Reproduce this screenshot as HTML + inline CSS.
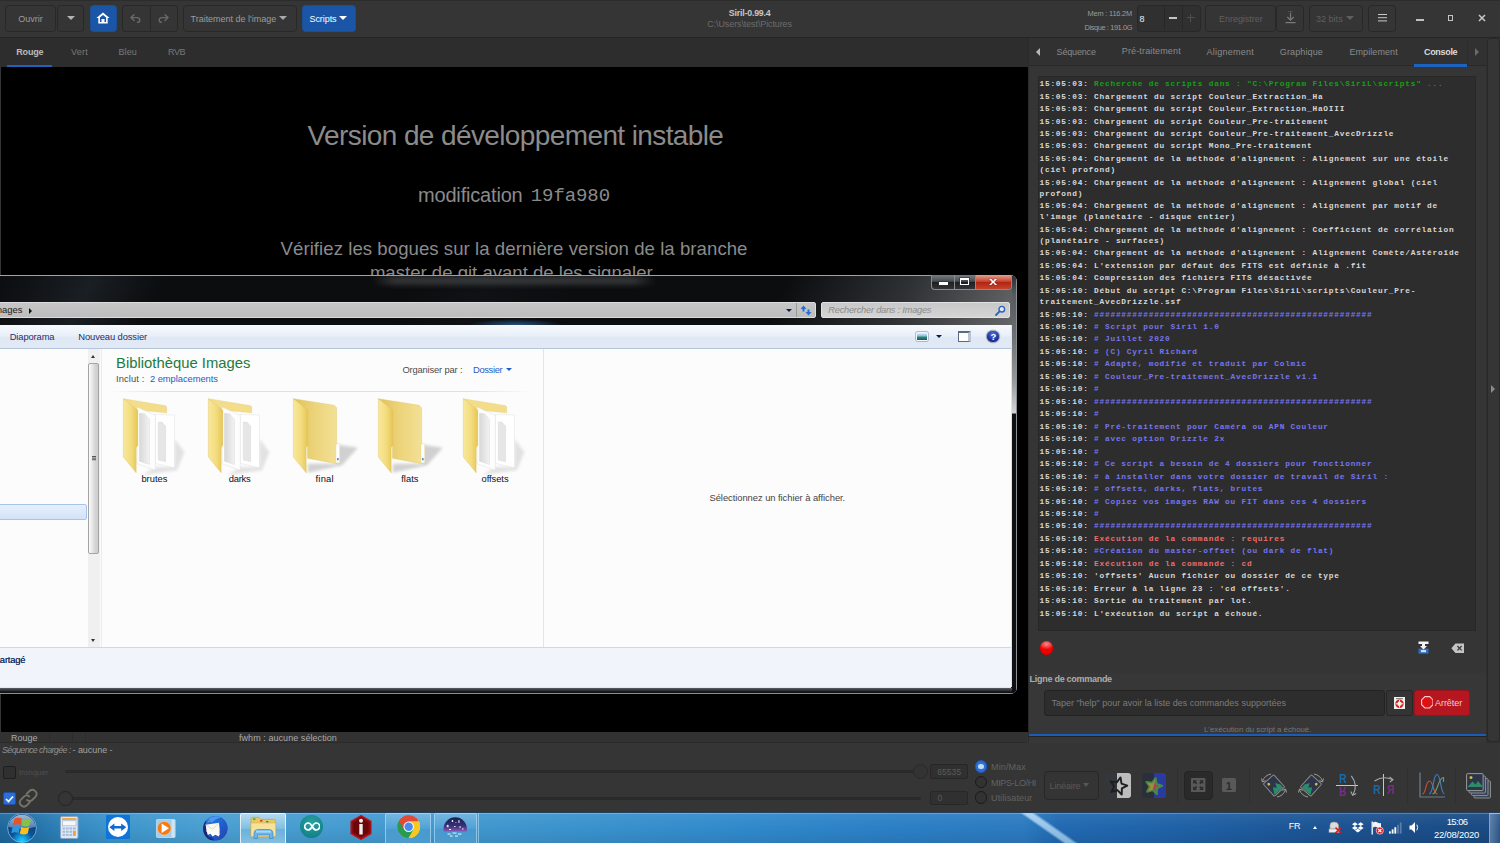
<!DOCTYPE html>
<html lang="fr">
<head>
<meta charset="utf-8">
<title>Siril-0.99.4</title>
<style>
*{box-sizing:border-box;margin:0;padding:0}
html,body{width:1500px;height:843px;overflow:hidden;background:#353535}
body{position:relative;font-family:"Liberation Sans",sans-serif;font-size:9px;color:#d0d0d0}
.abs{position:absolute}
.t{position:absolute;white-space:pre;line-height:1}
#hdr{position:absolute;left:0;top:0;width:1500px;height:38px;background:#353535;border-top:1px solid #2c2c2c;border-bottom:1px solid #252525}
#hdr .abs,#hdr .t{margin-top:-1px}
.btn{position:absolute;top:4px;height:27px;border:1px solid #282828;border-radius:3.5px;background:#353535}
.btn.blue{background:#1b56a6;border-color:#1a4f98}
#ltabs{position:absolute;left:0;top:38px;width:1028px;height:29px;background:#2d2d2d}
#img{position:absolute;left:1px;top:67px;width:1026.5px;height:665px;background:#000;overflow:hidden}
#status{position:absolute;left:0;top:732px;width:1027px;height:11px;background:#323232;border-bottom:1px solid #2b2b2b}
#rp{position:absolute;left:1029px;top:38px;width:457px;height:705px;background:#353535}
#rtabs{position:absolute;left:0;top:0;width:457px;height:28px;background:#313131;border-bottom:1px solid #292929}
#rlow{position:absolute;left:0;top:635px;width:457px;height:70px;background:#373737}
#console{position:absolute;left:9.3px;top:38px;width:438px;height:555px;background:#2d2d2d;border:1px solid #282828;font-family:"Liberation Mono",monospace;font-weight:bold;font-size:7.8px;letter-spacing:0.78px;line-height:11.17px;color:#d8d8d8;padding:2.1px 0 0 0.2px;overflow:hidden}
#console p{margin:0 0 1.3px 0;white-space:pre}
.g{color:#12a012}.b{color:#7676ee}.r{color:#ea6e6e}
#exp{position:absolute;left:0;top:275px;width:1017px;height:419px;overflow:hidden;border-radius:0 7px 7px 0;background:#0c0e10;box-shadow:inset 0 1px 0 #a0a4a8,inset -1px 0 0 #8c9094,inset 0 -1px 0 #8c9094}
#glass{position:absolute;left:0;top:1px;width:1016px;height:417px;border-radius:0 6px 6px 0;background:linear-gradient(115deg,rgba(40,48,56,0) 0,rgba(40,48,56,.5) 9%,rgba(20,24,28,0) 16%,rgba(20,24,28,0) 40%,rgba(40,46,52,.14) 47%,rgba(20,24,28,0) 56%,rgba(20,24,28,0) 76%,rgba(90,94,98,.45) 88%,rgba(140,142,144,.7) 100%) 0 0/1016px 50px no-repeat,#0b0d0f}
#bfr{position:absolute;left:0;top:412.5px;width:1012px;height:5.5px;background:linear-gradient(180deg,#5c6064 0,#3a3e42 35%,#14171a 75%,#0c0e10 100%)}
#rfr{position:absolute;left:1012px;top:1px;width:4px;height:417px;background:linear-gradient(180deg,#2a2e32 0,#565a5e 18px,#6c7074 60px,#96989a 105px,#d4d4d4 137px,#0e1012 138px,#0e1012 100%)}
#cl{position:absolute;left:0;top:49.7px;width:1011.4px;height:362px;overflow:hidden;background:#fcfcfc;box-shadow:1px 0 0 #dfe3e8,0 1px 0 #e4e8ee}
#tb{position:absolute;left:0;top:0;width:1012px;height:24px;background:linear-gradient(#f7fafd,#e9f0f9 45%,#dfe8f4 55%,#e1e9f5);border-bottom:1px solid #b4c4da}
#bottom{position:absolute;left:0;top:0;width:0;height:0}
#taskbar{position:absolute;left:0;top:812px;width:1500px;height:31px;overflow:hidden;background:linear-gradient(90deg,#1e679c 0,#2474aa 2.5%,#3389c0 5%,#3d95ca 7.5%,#4a9fd2 14%,#3f97ce 33%,#3089cb 50%,#2b7fc5 60%,#2c7ac0 68.3%,#216ab2 70.5%,#1f62a8 78%,#1c5494 88%,#1a4a82 100%);box-shadow:inset 0 1px 0 #22405e}
#tbsw{position:absolute;left:0;top:0;width:1500px;height:31px;background:linear-gradient(rgba(0,0,0,0) 1px,rgba(255,255,255,.28) 1px,rgba(255,255,255,.28) 2px,rgba(255,255,255,.06) 2px,rgba(255,255,255,0) 50%,rgba(0,0,0,.08))}
#streak{position:absolute;left:1019px;top:1px;width:17px;height:30px;transform-origin:0 0;transform:skewX(55deg);background:linear-gradient(90deg,rgba(190,225,250,0),rgba(190,225,250,.85) 28%,rgba(190,225,250,.85) 70%,rgba(190,225,250,0));-webkit-mask-image:linear-gradient(#000,rgba(0,0,0,.75));mask-image:linear-gradient(#000,rgba(0,0,0,.75))}
</style>
</head>
<body>
<div id="hdr">
<div class="btn " style="left:5px;width:51px;"></div>
<div class="t" style="left:18.2px;top:14.9px;font-size:9px;color:#9c9c9c;letter-spacing:0.03px;">Ouvrir</div>
<div class="btn " style="left:57px;width:27px;"></div>
<div class="abs" style="left:66.5px;top:15.8px;border-left:4px solid transparent;border-right:4px solid transparent;border-top:4.6px solid #b4b4b4"></div>
<div class="btn blue" style="left:89.5px;width:27.5px;"><svg class="abs" style="left:5.7px;top:6.7px" width="14" height="12" viewBox="0 0 14 12"><path d="M7 0.4 L13.6 6 H11.7 V11.4 H2.3 V6 H0.4 Z" fill="#fff"/><path d="M7 3 L10.1 5.6 V9.9 H8.5 V6.9 H5.5 V9.9 H3.9 V5.6 Z" fill="#1b56a6"/></svg></div>
<div class="btn " style="left:122px;width:29px;border-radius:3px 0 0 3px"><svg class="abs" style="left:7.2px;top:8.8px" width="11" height="9" viewBox="0 0 11 9"><path d="M4 0.8 L1 3.6 L4 6.4 M1.2 3.6 H7 Q9.8 3.6 9.8 6.2 Q9.8 8.3 7.5 8.3" fill="none" stroke="#696969" stroke-width="1.4" stroke-linecap="round" stroke-linejoin="round"/></svg></div>
<div class="btn " style="left:150px;width:28px;border-radius:0 3px 3px 0"><svg class="abs" style="left:6.8px;top:8.8px" width="11" height="9" viewBox="0 0 11 9"><path d="M7 0.8 L10 3.6 L7 6.4 M9.8 3.6 H4 Q1.2 3.6 1.2 6.2 Q1.2 8.3 3.5 8.3" fill="none" stroke="#696969" stroke-width="1.4" stroke-linecap="round" stroke-linejoin="round"/></svg></div>
<div class="btn " style="left:183px;width:114px;"></div>
<div class="t" style="left:190.5px;top:14.9px;font-size:9px;color:#9c9c9c;letter-spacing:-0.01px;">Traitement de l'image</div>
<div class="abs" style="left:279px;top:15.8px;border-left:4px solid transparent;border-right:4px solid transparent;border-top:4.6px solid #a8a8a8"></div>
<div class="btn blue" style="left:302px;width:54px;"></div>
<div class="t" style="left:309.5px;top:14.9px;font-size:9px;color:#fff;letter-spacing:-0.07px;">Scripts</div>
<div class="abs" style="left:338.5px;top:15.8px;border-left:4px solid transparent;border-right:4px solid transparent;border-top:4.6px solid #fff"></div>
<div class="t" style="left:728.8px;top:9.0px;font-size:8.8px;color:#c6c6c6;font-weight:bold;letter-spacing:-0.19px;">Siril-0.99.4</div>
<div class="t" style="left:707.3px;top:20.0px;font-size:9px;color:#6c6c6c;letter-spacing:-0.11px;">C:\Users\test\Pictures</div>
<div class="t" style="left:1087.5px;top:10.3px;font-size:7.4px;color:#9c9c9c;letter-spacing:-0.18px;">Mem : 116.2M</div>
<div class="t" style="left:1084.5px;top:23.8px;font-size:7.4px;color:#9c9c9c;letter-spacing:-0.39px;">Disque : 191.0G</div>
<div class="btn " style="left:1137px;width:63.5px;background:#303030"><div class="abs" style="left:26px;top:0;width:1px;height:25px;background:#282828"></div><div class="abs" style="left:44.2px;top:0;width:1px;height:25px;background:#282828"></div><div class="abs" style="left:30.8px;top:11.6px;width:8.2px;height:2.2px;background:#c4c4c4"></div><div class="abs" style="left:48.8px;top:12.2px;width:8px;height:1px;background:#4e4e4e"></div><div class="abs" style="left:52.3px;top:8.7px;width:1px;height:8px;background:#4e4e4e"></div></div>
<div class="t" style="left:1139.5px;top:14.5px;font-size:9px;color:#f0f0f0;">8</div>
<div class="btn " style="left:1205px;width:71px;"></div>
<div class="t" style="left:1219.0px;top:14.9px;font-size:9px;color:#5f5f5f;letter-spacing:-0.03px;">Enregistrer</div>
<div class="btn " style="left:1276px;width:28px;"><svg class="abs" style="left:8px;top:6px" width="11" height="13" viewBox="0 0 11 13"><path d="M3.4 0.7h1M5 0.7h1M6.6 0.7h1" stroke="#777" stroke-width="0.8"/><path d="M5.5 2 V9 M2.3 6 L5.5 9.2 L8.7 6 M0.5 11.6 H10.5" fill="none" stroke="#7a7a7a" stroke-width="1.2"/></svg></div>
<div class="btn " style="left:1308.5px;width:54.5px;"></div>
<div class="t" style="left:1316.0px;top:14.9px;font-size:9px;color:#5f5f5f;letter-spacing:0.02px;">32 bits</div>
<div class="abs" style="left:1345.5px;top:15.8px;border-left:4px solid transparent;border-right:4px solid transparent;border-top:4.6px solid #5f5f5f"></div>
<div class="btn " style="left:1368px;width:28px;"><div class="abs" style="left:8.7px;top:8.8px;width:9px;height:1.7px;background:#c8c8c8;box-shadow:0 3.2px 0 #c8c8c8,0 6.4px 0 #c8c8c8"></div></div>
<div class="abs" style="left:1416px;top:19.3px;width:7.5px;height:1.7px;background:#c0c0c0"></div>
<div class="abs" style="left:1448.2px;top:15.4px;width:5.2px;height:5.2px;border:1.6px solid #c4c4c4"></div>
<svg class="abs" style="left:1478px;top:14px" width="8" height="8" viewBox="0 0 8 8"><path d="M1 1 L7 7 M7 1 L1 7" stroke="#c8c8c8" stroke-width="1.5"/></svg>
</div>
<div id="ltabs"></div>
<div class="t" style="left:16.3px;top:48.2px;font-size:9px;color:#bcbcbc;font-weight:bold;letter-spacing:-0.20px;">Rouge</div>
<div class="t" style="left:71.0px;top:48.2px;font-size:9px;color:#787878;letter-spacing:0.25px;">Vert</div>
<div class="t" style="left:118.5px;top:48.2px;font-size:9px;color:#787878;letter-spacing:0.12px;">Bleu</div>
<div class="t" style="left:168.0px;top:48.2px;font-size:9px;color:#787878;letter-spacing:-0.45px;">RVB</div>
<div class="abs" style="left:7px;top:65px;width:45px;height:2px;background:#1c63c0"></div>
<div id="img">
<div class="t" style="left:306.6px;top:55.3px;font-size:28px;color:#8b8b8b;letter-spacing:-0.61px;">Version de développement instable</div>
<div class="t" style="left:417.0px;top:117.6px;font-size:20px;color:#8b8b8b;letter-spacing:-0.18px;">modification</div>
<div class="t" style="left:529.8px;top:119.9px;font-size:19px;color:#8b8b8b;font-family:'Liberation Mono',monospace;letter-spacing:-0.09px;">19fa980</div>
<div class="t" style="left:279.6px;top:172.8px;font-size:18.6px;color:#8b8b8b;letter-spacing:0.05px;">Vérifiez les bogues sur la dernière version de la branche</div>
<div class="t" style="left:368.9px;top:196.8px;font-size:18.6px;color:#8b8b8b;letter-spacing:-0.01px;">master de git avant de les signaler.</div>
</div>
<svg width="0" height="0" style="position:absolute"><defs>
<linearGradient id="fl" x1="0" y1="0" x2="1" y2="0"><stop offset="0" stop-color="#f8e89c"/><stop offset=".55" stop-color="#f3dc7c"/><stop offset="1" stop-color="#e6c556"/></linearGradient>
<linearGradient id="bk" x1="0" y1="0" x2="1" y2="0"><stop offset="0" stop-color="#e2c25a"/><stop offset=".5" stop-color="#ecd47a"/><stop offset="1" stop-color="#f3e096"/></linearGradient>
<linearGradient id="pg" x1="0" y1="0" x2="1" y2="0"><stop offset="0" stop-color="#d8d8d8"/><stop offset="1" stop-color="#f2f2f2"/></linearGradient>
<filter id="bl" x="-30%" y="-30%" width="160%" height="160%"><feGaussianBlur stdDeviation="9"/></filter>
</defs></svg>
<div id="exp">
<div id="glass"></div><div id="rfr"></div><div id="bfr"></div>
<div class="abs" style="left:372px;top:1px;width:284px;height:9px;background:linear-gradient(90deg,rgba(150,150,150,0),rgba(150,150,150,.28) 8%,rgba(150,150,150,.28) 92%,rgba(150,150,150,0));filter:blur(2.5px)"></div>
<div class="abs" style="left:468px;top:44px;width:96px;height:6px;background:radial-gradient(ellipse at 50% 100%,rgba(60,130,210,.6),rgba(60,130,210,0) 70%)"></div>
<div class="abs" style="left:931px;top:0;width:81px;height:15px;border:1px solid #8a8d90;border-top:none;border-radius:0 0 4px 4px;overflow:hidden;background:linear-gradient(#787c80,#4a4d50 45%,#1c1e20 52%,#323538)"><div class="abs" style="left:22px;top:0;width:1px;height:15px;background:#8a8d90"></div><div class="abs" style="left:43px;top:0;width:1px;height:15px;background:#8a8d90"></div><div class="abs" style="left:44px;top:0;width:37px;height:15px;background:linear-gradient(#e0a090,#c8402c 45%,#b42410 50%,#c84a30)"></div><div class="abs" style="left:7.3px;top:7.2px;width:8.4px;height:3px;background:#fff;box-shadow:0 0 0 .6px #333"></div><div class="abs" style="left:28.2px;top:3.2px;width:9px;height:6.8px;border:1.6px solid #fff;border-top-width:2.4px;box-shadow:0 0 0 .6px #333"></div></div>
<div class="t" style="left:989.6px;top:0.7px;font-size:11px;color:#fff;font-weight:bold;transform:scaleX(1.35);text-shadow:0 0 1px #400;">x</div>
<div class="abs" style="left:-5px;top:27px;width:821px;height:16px;background:linear-gradient(#c6c6c6,#bdbdbd);border:1px solid #dcdcdc;border-radius:2px"></div>
<div class="t" style="left:-8.3px;top:30.1px;font-size:9.4px;color:#1a1a1a;">Images</div>
<div class="abs" style="left:29px;top:32.5px;border-top:3px solid transparent;border-bottom:3px solid transparent;border-left:3.5px solid #111"></div>
<div class="abs" style="left:786px;top:34px;border-left:3px solid transparent;border-right:3px solid transparent;border-top:3.5px solid #0a1a5a"></div>
<div class="abs" style="left:796px;top:28px;width:1px;height:14px;background:#9a9a9a"></div>
<svg class="abs" style="left:800px;top:29.5px" width="12" height="11" viewBox="0 0 12 11"><path d="M3.5 0.5 L0.5 4 H2.5 V6.5 H4.5 V4 H6.5 Z" fill="#2a6fd0"/><path d="M8.5 10.5 L5.5 7 H7.5 V4.5 H9.5 V7 H11.5 Z" fill="#2a6fd0"/></svg>
<div class="abs" style="left:821px;top:27px;width:189px;height:16px;background:linear-gradient(#c8c8c8,#d4d4d4);border:1px solid #e2e2e2;border-radius:2px"></div>
<div class="t" style="left:828.3px;top:31.1px;font-size:9.2px;color:#8a8a8a;font-style:italic;letter-spacing:-0.20px;">Rechercher dans : Images</div>
<svg class="abs" style="left:995px;top:29.5px" width="11" height="11" viewBox="0 0 11 11"><circle cx="6.8" cy="4.2" r="2.8" fill="#dfe8f4" stroke="#2a64c0" stroke-width="1.4"/><path d="M4.6 6.4 L1 10" stroke="#2a64c0" stroke-width="1.8" stroke-linecap="round"/></svg>
<div id="cl">
<div id="tb"></div>
<div class="t" style="left:9.7px;top:7.0px;font-size:9.4px;color:#1e2f6e;letter-spacing:-0.12px;">Diaporama</div>
<div class="t" style="left:78.3px;top:7.0px;font-size:9.4px;color:#1e2f6e;letter-spacing:-0.11px;">Nouveau dossier</div>
<div class="abs" style="left:916px;top:7.2px;width:12px;height:9.4px;background:linear-gradient(180deg,#dff0ff 0,#8cc4f4 38%,#2f8a58 62%,#1c4c90 100%);border:1.4px solid #f4f8fc;border-radius:1.5px;box-shadow:0 0 0 .7px #9aa8bc"></div>
<div class="abs" style="left:935.5px;top:10.8px;border-left:3px solid transparent;border-right:3px solid transparent;border-top:3px solid #0a1a4a"></div>
<div class="abs" style="left:958.3px;top:6.5px;width:12.5px;height:10.5px;background:#fdfdfd;border:1px solid #5a6a82;border-top:2.5px solid #5a6a82;border-right:3px solid #b8c4d6"></div>
<div class="abs" style="left:986px;top:5px;width:13.6px;height:13.6px;border-radius:50%;background:radial-gradient(circle at 50% 30%,#4a78e0,#1a2f9a 65%,#14247e);border:1.3px solid #9698a4;box-shadow:0 0 0 0.5px #c8d0e0"></div>
<div class="t" style="left:990.4px;top:7.4px;font-size:9.5px;color:#fff;font-weight:bold;">?</div>
<div class="abs" style="left:0px;top:24px;width:1012px;height:299px;background:#fcfcfc"></div>
<div class="abs" style="left:-2px;top:179px;width:88.5px;height:16px;background:linear-gradient(#e6f0fc,#d2e2f8);border:1px solid #a8c4ea;border-radius:2px"></div>
<div class="abs" style="left:87.5px;top:24px;width:12.5px;height:299px;background:#f0f0f0"></div>
<div class="abs" style="left:87.6px;top:38.3px;width:11.6px;height:191.4px;background:linear-gradient(90deg,#fbfbfb,#e8e8e8 35%,#d3d3d3 70%,#cdcdcd);border:1px solid #a4a4a4;border-radius:2px"></div>
<div class="abs" style="left:91.5px;top:131.5px;width:4.5px;height:0.8px;background:#555;box-shadow:0 1.6px 0 #555,0 3.2px 0 #555"></div>
<div class="abs" style="left:91px;top:30.5px;border-left:2.7px solid transparent;border-right:2.7px solid transparent;border-bottom:3px solid #333"></div>
<div class="abs" style="left:91px;top:314.5px;border-left:2.7px solid transparent;border-right:2.7px solid transparent;border-top:3px solid #333"></div>
<div class="abs" style="left:100.5px;top:24px;width:1px;height:299px;background:#e6ecf5"></div>
<div class="abs" style="left:543px;top:24px;width:1px;height:299px;background:#dbe5f3"></div>
<div class="t" style="left:116.1px;top:30.9px;font-size:14.8px;color:#1e7a40;letter-spacing:0.01px;">Bibliothèque Images</div>
<div class="t" style="left:116.0px;top:49.3px;font-size:9.4px;color:#4c4c4c;letter-spacing:0.11px;">Inclut :</div>
<div class="t" style="left:150.0px;top:49.3px;font-size:9.4px;color:#1c5ec8;letter-spacing:-0.06px;">2 emplacements</div>
<div class="t" style="left:402.4px;top:40.6px;font-size:9.4px;color:#4c4c4c;letter-spacing:-0.17px;">Organiser par :</div>
<div class="t" style="left:473.0px;top:40.6px;font-size:9.4px;color:#1c5ec8;letter-spacing:-0.35px;">Dossier</div>
<div class="abs" style="left:506px;top:43.3px;border-left:3px solid transparent;border-right:3px solid transparent;border-top:3px solid #1c5ec8"></div>
<div class="abs" style="left:108px;top:66px;width:425px;height:1px;background:linear-gradient(90deg,rgba(214,226,242,0),#d6e2f2 15%,#d6e2f2 85%,rgba(214,226,242,0))"></div>
<svg class="abs" style="left:121.7px;top:72.2px" width="58.3" height="80" viewBox="0 0 350 480" overflow="visible">
<path d="M315 250 L375 330 L330 440 L120 470 L200 420 L315 420 Z" fill="#000" opacity=".10" filter="url(#bl)"/>
<path d="M8 10 L262 52 L268 60 V95 L95 78 Z" fill="#f3dd8a" stroke="#e2c664" stroke-width="2"/>
<path d="M200 105 L315 108 V425 L200 398 Z" fill="#fff" stroke="#d4d4d4" stroke-width="2"/>
<path d="M218 150 L240 150 L262 175 V388 L218 378 Z" fill="#e6e6e6" stroke="#cfcfcf" stroke-width="2"/>
<path d="M90 60 L200 110 V440 L90 400 Z" fill="#fdfdfd" stroke="#d0d0d0" stroke-width="2"/>
<path d="M105 98 L135 100 L165 135 V405 L105 385 Z" fill="url(#pg)" stroke="#cfcfcf" stroke-width="2"/>
<path d="M8 10 L95 80 V290 L85 305 V455 L8 360 Z" fill="url(#fl)" stroke="#d9b84c" stroke-width="2"/></svg>
<div class="t" style="left:141.4px;top:149.1px;font-size:9.4px;color:#111;letter-spacing:-0.01px;">brutes</div>
<svg class="abs" style="left:206.85000000000002px;top:72.2px" width="58.3" height="80" viewBox="0 0 350 480" overflow="visible">
<path d="M315 250 L375 330 L330 440 L120 470 L200 420 L315 420 Z" fill="#000" opacity=".10" filter="url(#bl)"/>
<path d="M8 10 L262 52 L268 60 V95 L95 78 Z" fill="#f3dd8a" stroke="#e2c664" stroke-width="2"/>
<path d="M200 105 L315 108 V425 L200 398 Z" fill="#fff" stroke="#d4d4d4" stroke-width="2"/>
<path d="M218 150 L240 150 L262 175 V388 L218 378 Z" fill="#e6e6e6" stroke="#cfcfcf" stroke-width="2"/>
<path d="M90 60 L200 110 V440 L90 400 Z" fill="#fdfdfd" stroke="#d0d0d0" stroke-width="2"/>
<path d="M105 98 L135 100 L165 135 V405 L105 385 Z" fill="url(#pg)" stroke="#cfcfcf" stroke-width="2"/>
<path d="M8 10 L95 80 V290 L85 305 V455 L8 360 Z" fill="url(#fl)" stroke="#d9b84c" stroke-width="2"/></svg>
<div class="t" style="left:228.8px;top:149.1px;font-size:9.4px;color:#111;letter-spacing:-0.27px;">darks</div>
<svg class="abs" style="left:292.0px;top:72.2px" width="66.7" height="80" viewBox="0 0 400 480" overflow="visible">
<path d="M268 285 L395 305 L300 410 L95 455 L95 400 L268 400 Z" fill="#000" opacity=".17" filter="url(#bl)"/>
<path d="M8 10 L253 50 L268 65 V400 L93 368 V80 Z" fill="url(#bk)" stroke="#dcbf58" stroke-width="2"/>
<rect x="264" y="282" width="22" height="112" rx="3" fill="#fff" stroke="#e6d08a" stroke-width="2"/>
<rect x="270" y="366" width="10" height="14" fill="#4f8fe0"/>
<path d="M8 10 L95 80 V290 L85 305 V455 L8 360 Z" fill="url(#fl)" stroke="#d9b84c" stroke-width="2"/></svg>
<div class="t" style="left:315.5px;top:149.1px;font-size:9.4px;color:#111;letter-spacing:0.24px;">final</div>
<svg class="abs" style="left:377.15000000000003px;top:72.2px" width="66.7" height="80" viewBox="0 0 400 480" overflow="visible">
<path d="M268 285 L395 305 L300 410 L95 455 L95 400 L268 400 Z" fill="#000" opacity=".17" filter="url(#bl)"/>
<path d="M8 10 L253 50 L268 65 V400 L93 368 V80 Z" fill="url(#bk)" stroke="#dcbf58" stroke-width="2"/>
<rect x="264" y="282" width="22" height="112" rx="3" fill="#fff" stroke="#e6d08a" stroke-width="2"/>
<rect x="270" y="366" width="10" height="14" fill="#4f8fe0"/>
<path d="M8 10 L95 80 V290 L85 305 V455 L8 360 Z" fill="url(#fl)" stroke="#d9b84c" stroke-width="2"/></svg>
<div class="t" style="left:401.2px;top:149.1px;font-size:9.4px;color:#111;letter-spacing:0.04px;">flats</div>
<svg class="abs" style="left:462.3px;top:72.2px" width="58.3" height="80" viewBox="0 0 350 480" overflow="visible">
<path d="M315 250 L375 330 L330 440 L120 470 L200 420 L315 420 Z" fill="#000" opacity=".10" filter="url(#bl)"/>
<path d="M8 10 L262 52 L268 60 V95 L95 78 Z" fill="#f3dd8a" stroke="#e2c664" stroke-width="2"/>
<path d="M200 105 L315 108 V425 L200 398 Z" fill="#fff" stroke="#d4d4d4" stroke-width="2"/>
<path d="M218 150 L240 150 L262 175 V388 L218 378 Z" fill="#e6e6e6" stroke="#cfcfcf" stroke-width="2"/>
<path d="M90 60 L200 110 V440 L90 400 Z" fill="#fdfdfd" stroke="#d0d0d0" stroke-width="2"/>
<path d="M105 98 L135 100 L165 135 V405 L105 385 Z" fill="url(#pg)" stroke="#cfcfcf" stroke-width="2"/>
<path d="M8 10 L95 80 V290 L85 305 V455 L8 360 Z" fill="url(#fl)" stroke="#d9b84c" stroke-width="2"/></svg>
<div class="t" style="left:481.5px;top:149.1px;font-size:9.4px;color:#111;letter-spacing:-0.06px;">offsets</div>
<div class="t" style="left:709.5px;top:168.3px;font-size:9.4px;color:#444;letter-spacing:-0.05px;">Sélectionnez un fichier à afficher.</div>
<div class="abs" style="left:0px;top:322.5px;width:1012px;height:41px;background:#f1f5fb;border-top:1px solid #ccd9ea"></div>
<div class="t" style="left:-5.2px;top:330.5px;font-size:9.4px;color:#1e3566;letter-spacing:-0.17px;text-shadow:0 0 .4px #1e3566;">partagé</div>
</div>
</div>
<div id="status"></div>
<div class="t" style="left:11.0px;top:733.6px;font-size:9px;color:#a8a8a8;letter-spacing:-0.01px;">Rouge</div>
<div class="t" style="left:239.0px;top:733.6px;font-size:9px;color:#a8a8a8;letter-spacing:0.06px;">fwhm : aucune sélection</div>
<div class="abs" style="left:49px;top:733px;width:1px;height:9px;background:#2c2c2c"></div>
<div class="abs" style="left:72px;top:733px;width:1px;height:9px;background:#2c2c2c"></div>
<div class="abs" style="left:85px;top:733px;width:1px;height:9px;background:#2c2c2c"></div>
<div class="abs" style="left:1028px;top:38px;width:1px;height:705px;background:#2b2b2b"></div>
<div id="rp">
<div id="rtabs"></div>
<div id="rlow"></div>
<div id="console">
<p>15:05:03: <span class="g">Recherche de scripts dans : "C:\Program Files\SiriL\scripts" ...</span></p>
<p>15:05:03: Chargement du script Couleur_Extraction_Ha</p>
<p>15:05:03: Chargement du script Couleur_Extraction_HaOIII</p>
<p>15:05:03: Chargement du script Couleur_Pre-traitement</p>
<p>15:05:03: Chargement du script Couleur_Pre-traitement_AvecDrizzle</p>
<p>15:05:03: Chargement du script Mono_Pre-traitement</p>
<p>15:05:04: Chargement de la méthode d'alignement : Alignement sur une étoile<br>(ciel profond)</p>
<p>15:05:04: Chargement de la méthode d'alignement : Alignement global (ciel<br>profond)</p>
<p>15:05:04: Chargement de la méthode d'alignement : Alignement par motif de<br>l'image (planétaire - disque entier)</p>
<p>15:05:04: Chargement de la méthode d'alignement : Coefficient de corrélation<br>(planétaire - surfaces)</p>
<p>15:05:04: Chargement de la méthode d'alignement : Alignement Comète/Astéroïde</p>
<p>15:05:04: L'extension par défaut des FITS est définie à .fit</p>
<p>15:05:04: Compression des fichiers FITS désactivée</p>
<p>15:05:10: Début du script C:\Program Files\SiriL\scripts\Couleur_Pre-<br>traitement_AvecDrizzle.ssf</p>
<p>15:05:10: <span class="b">###################################################</span></p>
<p>15:05:10: <span class="b"># Script pour Siril 1.0</span></p>
<p>15:05:10: <span class="b"># Juillet 2020</span></p>
<p>15:05:10: <span class="b"># (C) Cyril Richard</span></p>
<p>15:05:10: <span class="b"># Adapté, modifié et traduit par Colmic</span></p>
<p>15:05:10: <span class="b"># Couleur_Pre-traitement_AvecDrizzle v1.1</span></p>
<p>15:05:10: <span class="b">#</span></p>
<p>15:05:10: <span class="b">###################################################</span></p>
<p>15:05:10: <span class="b">#</span></p>
<p>15:05:10: <span class="b"># Pré-traitement pour Caméra ou APN Couleur</span></p>
<p>15:05:10: <span class="b"># avec option Drizzle 2x</span></p>
<p>15:05:10: <span class="b">#</span></p>
<p>15:05:10: <span class="b"># Ce script a besoin de 4 dossiers pour fonctionner</span></p>
<p>15:05:10: <span class="b"># à installer dans votre dossier de travail de Siril :</span></p>
<p>15:05:10: <span class="b"># offsets, darks, flats, brutes</span></p>
<p>15:05:10: <span class="b"># Copiez vos images RAW ou FIT dans ces 4 dossiers</span></p>
<p>15:05:10: <span class="b">#</span></p>
<p>15:05:10: <span class="b">###################################################</span></p>
<p>15:05:10: <span class="r">Exécution de la commande : requires</span></p>
<p>15:05:10: <span class="b">#Création du master-offset (ou dark de flat)</span></p>
<p>15:05:10: <span class="r">Exécution de la commande : cd</span></p>
<p>15:05:10: 'offsets' Aucun fichier ou dossier de ce type</p>
<p>15:05:10: Erreur à la ligne 23 : 'cd offsets'.</p>
<p>15:05:10: Sortie du traitement par lot.</p>
<p>15:05:10: L'exécution du script a échoué.</p>
</div>
</div>
<div class="abs" style="left:1036px;top:47.5px;border-top:4px solid transparent;border-bottom:4px solid transparent;border-right:4.5px solid #b8b8b8"></div>
<div class="t" style="left:1056.6px;top:48.0px;font-size:9px;color:#8a8a8a;letter-spacing:-0.17px;">Séquence</div>
<div class="t" style="left:1121.8px;top:46.5px;font-size:9px;color:#8a8a8a;letter-spacing:0.14px;">Pré-traitement</div>
<div class="t" style="left:1206.5px;top:48.0px;font-size:9px;color:#8a8a8a;letter-spacing:0.25px;">Alignement</div>
<div class="t" style="left:1279.8px;top:48.0px;font-size:9px;color:#8a8a8a;letter-spacing:0.13px;">Graphique</div>
<div class="t" style="left:1349.4px;top:48.0px;font-size:9px;color:#8a8a8a;letter-spacing:0.08px;">Empilement</div>
<div class="t" style="left:1424.0px;top:48.0px;font-size:9px;color:#dcdcdc;font-weight:bold;letter-spacing:-0.32px;">Console</div>
<div class="abs" style="left:1414px;top:64px;width:53px;height:3px;background:#1c63c0"></div>
<div class="abs" style="left:1474.5px;top:47.5px;border-top:4px solid transparent;border-bottom:4px solid transparent;border-left:4.5px solid #6a6a6a"></div>
<div class="abs" style="left:1486px;top:38px;width:14px;height:705px;background:#303030"></div>
<div class="abs" style="left:1487px;top:38px;width:12.5px;height:704px;border:1px solid #282828;border-radius:3.5px;background:#353535"></div>
<div class="abs" style="left:1466.5px;top:39px;width:1px;height:26px;background:#2c2c2c"></div>
<div class="abs" style="left:1490.5px;top:385px;border-top:4px solid transparent;border-bottom:4px solid transparent;border-left:4.5px solid #8c8c8c"></div>
<div class="abs" style="left:1039.6px;top:641.2px;width:13.4px;height:13.4px;border-radius:50%;background:radial-gradient(ellipse 60% 40% at 50% 22%,rgba(255,255,255,.55),rgba(255,255,255,0) 100%),radial-gradient(circle at 50% 50%,#f00000 55%,#c00000 85%,#8a0000)"></div>
<svg class="abs" style="left:1418px;top:641px" width="11" height="13" viewBox="0 0 11 13"><rect x="0.5" y="7.6" width="10" height="5" fill="#2f6fd0"/><rect x="3" y="9" width="5" height="2.2" fill="#cfe0f8"/><path d="M0.5 0.6 H10.5 V3 H7 V5 H9 L5.5 8.6 L2 5 H4 V3 H0.5 Z" fill="#f4f4f4"/></svg>
<svg class="abs" style="left:1450.5px;top:642.6px" width="13.5" height="10.5" viewBox="0 0 13.5 10.5"><path d="M0.4 5.25 L4.4 0.5 H13 V10 H4.4 Z" fill="#c4c4c4"/><path d="M6.4 3 L10.6 7.4 M10.6 3 L6.4 7.4" stroke="#3a3a3a" stroke-width="1.3"/></svg>
<div class="t" style="left:1029.6px;top:674.9px;font-size:9px;color:#aeaeae;font-weight:bold;letter-spacing:-0.28px;">Ligne de commande</div>
<div class="abs" style="left:1044.4px;top:689.8px;width:340.3px;height:26px;background:#2d2d2d;border:1px solid #232323;border-radius:3px"></div>
<div class="t" style="left:1051.4px;top:698.9px;font-size:9px;color:#7c7c7c;">Taper "help" pour avoir la liste des commandes supportées</div>
<div class="abs" style="left:1385.5px;top:689.5px;width:27.5px;height:26.5px;border:1px solid #262626;border-radius:3px;background:#343434"></div>
<svg class="abs" style="left:1394px;top:696.5px" width="11" height="12.5" viewBox="0 0 11 12.5"><rect width="11" height="12.5" fill="#f0f0f0"/><circle cx="5.5" cy="6.8" r="3.2" fill="none" stroke="#d02020" stroke-width="2"/><path d="M5.5 3 V10.6 M1.7 6.8 H9.3" stroke="#f0f0f0" stroke-width="1"/><rect x="2" y="1" width="7" height="1.2" fill="#888"/></svg>
<div class="abs" style="left:1413.8px;top:689.5px;width:56.5px;height:26.3px;background:#b5161f;border:1px solid #9c121a;border-radius:3px"></div>
<svg class="abs" style="left:1420.5px;top:696px" width="12.6" height="12.6" viewBox="0 0 12.6 12.6"><path d="M3.9 0.6 H8.7 L12 3.9 V8.7 L8.7 12 H3.9 L0.6 8.7 V3.9 Z" fill="#e01010" stroke="#f0d0d0" stroke-width="1.1"/></svg>
<div class="t" style="left:1435.0px;top:698.7px;font-size:9px;color:#f2cccc;letter-spacing:-0.05px;">Arrêter</div>
<div class="t" style="left:1204.1px;top:726.1px;font-size:7.8px;color:#787878;">L'exécution du script a échoué.</div>
<div class="abs" style="left:1029px;top:734px;width:457px;height:2px;background:#1b5cb8"></div>
<div class="abs" style="left:1029px;top:736px;width:457px;height:1px;background:#222"></div>
<div id="bottom">
<div class="t" style="left:2.0px;top:746.0px;font-size:9px;color:#8e8e8e;font-style:italic;letter-spacing:-0.67px;">Séquence chargée :</div>
<div class="t" style="left:72.5px;top:746.0px;font-size:9px;color:#a2a2a2;letter-spacing:-0.05px;">- aucune -</div>
<div class="abs" style="left:3px;top:766px;width:12.5px;height:12.5px;background:#303030;border:1px solid #1e1e1e;border-radius:2px"></div>
<div class="t" style="left:19.0px;top:768.8px;font-size:8px;color:#4e4e4e;letter-spacing:-0.04px;">tronquer</div>
<div class="abs" style="left:65px;top:770.3px;width:855px;height:3px;background:#2c2c2c;border:1px solid #292929;border-radius:1.5px"></div>
<div class="abs" style="left:912.5px;top:764px;width:15px;height:15px;border-radius:50%;background:#333;border:1px solid #2a2a2a"></div>
<div class="abs" style="left:3px;top:792.2px;width:12.6px;height:12.6px;background:#2b6fd8;border:1px solid #1f4f9e;border-radius:2px"></div>
<svg class="abs" style="left:5px;top:794.6px" width="9" height="8" viewBox="0 0 9 8"><path d="M1 4 L3.5 6.5 L8 1.5" fill="none" stroke="#fff" stroke-width="1.7"/></svg>
<svg class="abs" style="left:17px;top:787.2px" width="22.4" height="22.4" viewBox="0 0 20 20"><g fill="none" stroke="#74746a" stroke-width="1.7" stroke-linecap="round"><path d="M8.6 6.2 L11.4 3.4 A3.7 3.7 0 0 1 16.6 8.6 L13.8 11.4 A3.7 3.7 0 0 1 9 11.6"/><path d="M11.4 13.8 L8.6 16.6 A3.7 3.7 0 0 1 3.4 11.4 L6.2 8.6 A3.7 3.7 0 0 1 11 8.4"/></g></svg>
<div class="abs" style="left:70px;top:797px;width:850.5px;height:3px;background:#2c2c2c;border:1px solid #292929;border-radius:1.5px"></div>
<div class="abs" style="left:58px;top:790.5px;width:15px;height:15px;border-radius:50%;background:#353535;border:1px solid #242424"></div>
<div class="abs" style="left:930.4px;top:764.2px;width:37.3px;height:14.5px;background:#303030;border:1px solid #272727;border-radius:2px"></div>
<div class="t" style="left:937.2px;top:768.1px;font-size:8.4px;color:#5c5c5c;letter-spacing:0.14px;">65535</div>
<div class="abs" style="left:930.4px;top:790.6px;width:37.3px;height:14.6px;background:#303030;border:1px solid #272727;border-radius:2px"></div>
<div class="t" style="left:937.6px;top:794.4px;font-size:8.4px;color:#5c5c5c;">0</div>
<div class="abs" style="left:974.7px;top:760.3000000000001px;width:12.8px;height:12.8px;border-radius:50%;background:#2b6fd8;border:1px solid #1f57b0"></div><div class="abs" style="left:978.3000000000001px;top:763.9000000000001px;width:5.6px;height:5.6px;border-radius:50%;background:#c4d8f4"></div>
<div class="t" style="left:991.0px;top:763.0px;font-size:9px;color:#626262;letter-spacing:0.14px;">Min/Max</div>
<div class="abs" style="left:974.7px;top:775.7px;width:12.8px;height:12.8px;border-radius:50%;background:#323232;border:1.4px solid #1b1b1b"></div>
<div class="t" style="left:991.0px;top:778.5px;font-size:9px;color:#626262;letter-spacing:-0.35px;">MIPS-LO/HI</div>
<div class="abs" style="left:974.7px;top:791.2px;width:12.8px;height:12.8px;border-radius:50%;background:#323232;border:1.4px solid #1b1b1b"></div>
<div class="t" style="left:991.0px;top:794.0px;font-size:9px;color:#626262;letter-spacing:0.13px;">Utilisateur</div>
<div class="abs" style="left:1044px;top:770.5px;width:54.5px;height:29px;border:1px solid #272727;border-radius:4px;background:#343434"></div>
<div class="t" style="left:1049.5px;top:781.6px;font-size:9px;color:#585858;letter-spacing:-0.13px;">Linéaire</div>
<div class="abs" style="left:1083px;top:782.5px;border-left:3.8px solid transparent;border-right:3.8px solid transparent;border-top:4.2px solid #585858"></div>
<div class="abs" style="left:1105px;top:772.6px;width:25.5px;height:25.3px;border-radius:3px;background:linear-gradient(90deg,#33363a 47%,#bdbdbd 47%)"></div>
<svg class="abs" style="left:1107.5px;top:774.5px" width="21" height="21" viewBox="0 0 24 24"><path d="M12 2.5 L14.8 9 L21.8 9.6 L16.5 14.2 L18.1 21.1 L12 17.4 L5.9 21.1 L7.5 14.2 L2.2 9.6 L9.2 9 Z" transform="rotate(14 12 12)" fill="none" stroke="#1e1e1e" stroke-width="2.2" stroke-linejoin="round"/></svg>
<div class="abs" style="left:1141.7px;top:772.6px;width:24.6px;height:25.3px;border-radius:3px;background:linear-gradient(90deg,#2b2f3a 50%,#2b3a9e 50%)"></div>
<svg class="abs" style="left:1144px;top:775.5px;opacity:.85" width="19.5" height="19.5" viewBox="0 0 24 24"><g transform="rotate(14 12 12)"><path d="M12 2.5 L14.8 9 L21.8 9.6 L16.5 14.2 L18.1 21.1 L12 17.4 L5.9 21.1 L7.5 14.2 L2.2 9.6 L9.2 9 Z" fill="#b84a4a" stroke="#4a9a3a" stroke-width="2.6" stroke-linejoin="round"/><path d="M12 4 L9.6 9.6 L3.5 10.2 L8.2 14.4 L6.8 20.2 L12 17 Z" fill="#b0a040"/></g></svg>
<div class="abs" style="left:1177px;top:768px;width:1px;height:35px;background:#2f2f2f"></div>
<div class="abs" style="left:1183.5px;top:770.5px;width:29.5px;height:29px;border:1px solid #242424;border-radius:4px;background:#2a2a2a"></div>
<svg class="abs" style="left:1191.3px;top:777.9px" width="14.4" height="14.2" viewBox="0 0 14.4 14.2"><rect width="14.4" height="14.2" rx="1" fill="#585858"/><g fill="#2a2a2a"><path d="M2.2 2.2 H6 L4.7 3.5 L6.2 5 L5 6.2 L3.5 4.7 L2.2 6 Z"/><path d="M12.2 2.2 V6 L10.9 4.7 L9.4 6.2 L8.2 5 L9.7 3.5 L8.4 2.2 Z"/><path d="M2.2 12 V8.2 L3.5 9.5 L5 8 L6.2 9.2 L4.7 10.7 L6 12 Z"/><path d="M12.2 12 H8.4 L9.7 10.7 L8.2 9.2 L9.4 8 L10.9 9.5 L12.2 8.2 Z"/></g></svg>
<div class="abs" style="left:1222px;top:778.2px;width:14px;height:14px;background:#595959;border-radius:1.5px"></div>
<div class="t" style="left:1225.8px;top:780.6px;font-size:11px;color:#2c2c2c;font-weight:bold;">1</div>
<div class="abs" style="left:1249px;top:768px;width:1px;height:35px;background:#2f2f2f"></div>
<svg class="abs" style="left:1260.5px;top:773px" width="26" height="25" viewBox="0 0 26 25"><g>
<g transform="rotate(-42 13 12.5)"><rect x="6" y="4.2" width="14" height="16.6" rx="1" fill="#2d3548" stroke="#8a8a8a" stroke-width="1"/><path d="M7.5 19 L11 13 L13.5 16 L15.5 11.5 L18.5 16 V20 H7.5 Z" fill="#2f8a6a"/><circle cx="10" cy="8" r="1.4" fill="#d8b83a"/></g>
<path d="M1.5 8 Q4 2 10 1" fill="none" stroke="#9a9a9a" stroke-width="1"/><path d="M0.5 5.5 L1.4 9 L4.6 7.6" fill="none" stroke="#9a9a9a" stroke-width="1"/>
<path d="M24.5 17 Q22 23 16 24" fill="none" stroke="#9a9a9a" stroke-width="1"/><path d="M25.5 19.5 L24.6 16 L21.4 17.4" fill="none" stroke="#9a9a9a" stroke-width="1"/>
</g></svg>
<svg class="abs" style="left:1297.5px;top:773px" width="26" height="25" viewBox="0 0 26 25"><g transform="translate(26 0) scale(-1 1)">
<g transform="rotate(-42 13 12.5)"><rect x="6" y="4.2" width="14" height="16.6" rx="1" fill="#2d3548" stroke="#8a8a8a" stroke-width="1"/><path d="M7.5 19 L11 13 L13.5 16 L15.5 11.5 L18.5 16 V20 H7.5 Z" fill="#2f8a6a"/><circle cx="10" cy="8" r="1.4" fill="#d8b83a"/></g>
<path d="M1.5 8 Q4 2 10 1" fill="none" stroke="#9a9a9a" stroke-width="1"/><path d="M0.5 5.5 L1.4 9 L4.6 7.6" fill="none" stroke="#9a9a9a" stroke-width="1"/>
<path d="M24.5 17 Q22 23 16 24" fill="none" stroke="#9a9a9a" stroke-width="1"/><path d="M25.5 19.5 L24.6 16 L21.4 17.4" fill="none" stroke="#9a9a9a" stroke-width="1"/>
</g></svg>
<div class="t" style="left:1338.3px;top:772.2px;font-size:13px;font-weight:bold;color:#1c6aa6;transform:scaleX(.8);transform-origin:50% 50%">R</div>
<div class="t" style="left:1338.3px;top:785.4px;font-size:13px;font-weight:bold;color:#7a2c8c;transform:scale(.8,-1);transform-origin:50% 50%">R</div>
<div class="abs" style="left:1335.8px;top:784.6px;width:22.2px;height:1.4px;background:#c8c8c8"></div>
<svg class="abs" style="left:1348px;top:774px" width="12" height="24" viewBox="0 0 12 24"><path d="M3.3 1.8 Q10.5 11 5 20.5" fill="none" stroke="#a8a8a8" stroke-width="1.1"/><path d="M2.8 17.6 L4.6 21.2 L8.2 19.4" fill="none" stroke="#a8a8a8" stroke-width="1.1"/></svg>
<div class="t" style="left:1372.4px;top:783.4px;font-size:13px;font-weight:bold;color:#1c6aa6;transform:scaleX(.8);transform-origin:50% 50%">R</div>
<div class="t" style="left:1385.6px;top:783.4px;font-size:13px;font-weight:bold;color:#7a2c8c;transform:scale(-.8,1);transform-origin:50% 50%">R</div>
<div class="abs" style="left:1382.7px;top:774px;width:1.4px;height:22px;background:#c8c8c8"></div>
<svg class="abs" style="left:1373px;top:775px" width="22" height="8" viewBox="0 0 22 8"><path d="M1.5 6 Q10 0.5 19.5 4.5" fill="none" stroke="#a8a8a8" stroke-width="1.1"/><path d="M16.5 1.8 L20 4.8 L16.8 7" fill="none" stroke="#a8a8a8" stroke-width="1.1"/></svg>
<div class="abs" style="left:1407px;top:768px;width:1px;height:35px;background:#2f2f2f"></div>
<svg class="abs" style="left:1418.5px;top:772px" width="27" height="26" viewBox="0 0 27 26"><path d="M1 0.5 V25 H26" fill="none" stroke="#6b7f90" stroke-width="1.2"/><path d="M3.5 22 C7 22 6.5 9 10.5 9 C14.5 9 14 22 18.5 22" fill="none" stroke="#c0503a" stroke-width="1.2"/><path d="M10 22 C14.5 22 14 2.5 18 2.5 C22 2.5 21.5 22 25.5 22" fill="none" stroke="#3f7fc0" stroke-width="1.2"/><path d="M13.5 22 C18.5 22 19 5.5 24.5 5.5 V10" fill="none" stroke="#6a9a7a" stroke-width="1.2"/></svg>
<div class="abs" style="left:1455px;top:768px;width:1px;height:35px;background:#2f2f2f"></div>
<svg class="abs" style="left:1466px;top:772.5px" width="26" height="26" viewBox="0 0 26 26"><rect x="8" y="8" width="16.5" height="17" rx="1" fill="#3a4458" stroke="#8a8a8a" stroke-width="1"/><rect x="5.5" y="5.5" width="16.5" height="17" rx="1" fill="#3a4458" stroke="#8a8a8a" stroke-width="1"/><rect x="3" y="3" width="16.5" height="17" rx="1" fill="#3a4458" stroke="#8a8a8a" stroke-width="1"/><rect x="0.6" y="0.6" width="16.5" height="17" rx="1" fill="#2d3548" stroke="#9a9a9a" stroke-width="1"/><path d="M1.5 14 L6.5 8.5 L9.5 11.5 L12 8 L16.2 13 V14 Z" fill="#2f8a6a"/><circle cx="5" cy="4.6" r="1.5" fill="#d8b83a"/></svg>
</div>
<div id="taskbar">
<div id="tbsw"></div><div id="streak"></div>
<svg class="abs" style="left:5.5px;top:-0.5px" width="32" height="32" viewBox="0 0 32 32"><defs><radialGradient id="ob" cx="50%" cy="96%" r="62%"><stop offset="0" stop-color="#18d8ff"/><stop offset=".3" stop-color="#1398dc"/><stop offset=".62" stop-color="#0d5296"/><stop offset="1" stop-color="#0c4686"/></radialGradient><linearGradient id="oh" x1="0" y1="0" x2="0" y2="1"><stop offset="0" stop-color="#c4d6e6"/><stop offset="1" stop-color="#5a8cbc"/></linearGradient></defs><circle cx="16" cy="16" r="14.4" fill="url(#ob)" stroke="#8fbde4" stroke-width="1" stroke-opacity=".75"/><path d="M2.3 14.8 A13.8 13.8 0 0 1 29.7 14.8 Q16 18.6 2.3 14.8 Z" fill="url(#oh)" opacity=".8"/><path d="M8.6 6.6 Q12 5 15.8 6.5 L14.4 13 Q11 11.6 7 13.2 Z" fill="#e8532a"/><path d="M17 7 Q21 8.8 25 7 L23.5 13.6 Q19.6 15.4 15.6 13.6 Z" fill="#86c440"/><path d="M6.7 14.6 Q10.4 12.9 14.1 14.4 L12.6 21 Q9 19.5 5.2 21.2 Z" fill="#2f95e2"/><path d="M15.3 15 Q19.3 16.8 23.2 15 L21.7 21.6 Q17.8 23.4 13.8 21.6 Z" fill="#fbc018"/></svg>
<svg class="abs" style="left:60px;top:3.5px" width="18.5" height="23" viewBox="0 0 18.5 23"><rect x="0.5" y="0.5" width="17.5" height="22" rx="1.5" fill="#dbe8f6" stroke="#8aa4c4"/><rect x="2" y="2" width="14.5" height="2" fill="#f0a848"/><rect x="2.5" y="4.8" width="13.5" height="5" fill="#f4f8fc" stroke="#9ab0cc" stroke-width=".6"/><g fill="#a8bcd6"><rect x="2.5" y="11.5" width="2.6" height="2"/><rect x="6" y="11.5" width="2.6" height="2"/><rect x="9.5" y="11.5" width="2.6" height="2"/><rect x="2.5" y="14.7" width="2.6" height="2"/><rect x="6" y="14.7" width="2.6" height="2"/><rect x="9.5" y="14.7" width="2.6" height="2"/><rect x="2.5" y="17.9" width="2.6" height="2"/><rect x="6" y="17.9" width="2.6" height="2"/><rect x="9.5" y="17.9" width="2.6" height="2"/><rect x="13" y="11.5" width="2.8" height="2"/></g><rect x="13" y="14.7" width="2.8" height="5.2" fill="#f0a040"/></svg>
<div class="abs" style="left:105.5px;top:2.5px;width:24.5px;height:24.5px;background:#0e74d8;border-radius:1px"></div>
<div class="abs" style="left:107.8px;top:4.6px;width:20px;height:20px;border-radius:50%;background:#fff"></div>
<svg class="abs" style="left:109px;top:10.5px" width="17.6" height="8.4" viewBox="0 0 17.6 8.4"><path d="M0.3 4.2 L5.4 0.4 V2.9 H12.2 V0.4 L17.3 4.2 L12.2 8 V5.5 H5.4 V8 Z" fill="#0e6ad0"/></svg>
<svg class="abs" style="left:155.5px;top:7px" width="20" height="19" viewBox="0 0 20 19"><rect x="0.5" y="0.5" width="18.6" height="18" rx="0.8" fill="#a4cdec" stroke="#c4e0f4" stroke-width=".8"/><rect x="15.6" y="1" width="3" height="17" fill="#cfe6f6"/><circle cx="8.2" cy="9.3" r="6.8" fill="#f47a12"/><circle cx="8.2" cy="9.3" r="6.8" fill="none" stroke="#fbd0a0" stroke-width=".5"/><path d="M5.6 4.6 L13 9.3 L5.6 14 Z" fill="#fff"/></svg>
<svg class="abs" style="left:201.6px;top:2.6px" width="26.5" height="26.5" viewBox="0 0 26 26"><defs><linearGradient id="tbg" x1="0" y1="0" x2="1" y2="1"><stop offset="0" stop-color="#2f86e6"/><stop offset=".55" stop-color="#1f5fd0"/><stop offset="1" stop-color="#2a3fa8"/></linearGradient></defs><path d="M13 1 A12 12 0 1 1 12.9 25 L16.5 22.5 L12 24.8 A12 12 0 0 1 13 1 Z" fill="url(#tbg)"/><circle cx="13" cy="13" r="12" fill="url(#tbg)"/><path d="M4.2 4.9 Q0.2 10 1.4 16.4 Q2.6 21.6 7.2 24 L6.2 19.5 L3.6 9.4 Z" fill="#1a2878"/><path d="M5 22.6 Q8 25.4 12.6 25 L9 21 Z" fill="#1d2f8c"/><path d="M6.5 3.8 Q12 -0.4 18.6 2.4 Q13 3.6 9.4 7.6 Z" fill="#4a9af0"/><path d="M3.6 9.6 L16.6 7.6 Q17.6 13 17.2 19.6 L4.6 16.6 Z" fill="#fbf8f0"/><path d="M3.6 9.6 L10.6 14 L16.6 7.6" fill="none" stroke="#d8d2c4" stroke-width=".8"/><path d="M4.4 15 L5.6 19.6 L8.4 18.4 L10.4 21 L13 19.4 L16.6 21 L17.2 18.4 Z" fill="#fdfcf8"/><circle cx="6.9" cy="6.2" r=".9" fill="#e08a20"/></svg>
<div class="abs" style="left:240.3px;top:0.5px;width:46px;height:31px;border:1px solid rgba(255,255,255,.75);border-bottom:none;border-radius:2px 2px 0 0;background:linear-gradient(rgba(240,250,255,.62),rgba(190,225,245,.5) 48%,rgba(150,205,238,.45) 52%,rgba(190,230,250,.55))"></div>
<svg class="abs" style="left:250px;top:4px" width="27" height="23.5" viewBox="0 0 27 23.5"><path d="M1 3 Q1 1.4 2.6 1.4 H9 L11 3.4 H24 Q25.6 3.4 25.6 5 V20 H1 Z" fill="#e8c860" stroke="#c8a040" stroke-width=".7"/><rect x="3" y="2.3" width="2.4" height="1.6" fill="#30b040"/><rect x="10" y="4" width="2.4" height="1.6" fill="#e04030"/><rect x="16" y="5" width="2.4" height="1.6" fill="#3080e0"/><path d="M1 7 H25.6 V19 Q25.6 20.6 24 20.6 H2.6 Q1 20.6 1 19 Z" fill="#f6e29a" stroke="#d8b858" stroke-width=".6"/><path d="M4 17.5 Q4 13.5 8 13.5 H19 Q23 13.5 23 17.5 V22.5 H19.5 V19 H7.5 V22.5 H4 Z" fill="#6ab4ec" stroke="#3a88c8" stroke-width=".7"/><rect x="6" y="14.6" width="15" height="2" fill="#a8d8f8"/></svg>
<div class="abs" style="left:300px;top:2.5px;width:23.4px;height:23.4px;border-radius:50%;background:radial-gradient(circle at 50% 35%,#2aa0a0,#0a7a80)"></div>
<svg class="abs" style="left:303.5px;top:9.6px" width="16.4" height="9" viewBox="0 0 16.4 9"><path d="M8.2 4.5 C6.6 1.6 5.4 1 4.2 1 A3.5 3.5 0 0 0 4.2 8 C5.4 8 6.6 7.4 8.2 4.5 C9.8 1.6 11 1 12.2 1 A3.5 3.5 0 0 1 12.2 8 C11 8 9.8 7.4 8.2 4.5 Z" fill="none" stroke="#fff" stroke-width="1.7"/></svg>
<svg class="abs" style="left:349.5px;top:2.5px" width="22" height="25" viewBox="0 0 22 25"><path d="M11 0.6 L21 6.4 V18.6 L11 24.4 L1 18.6 V6.4 Z" fill="#8a0a0e" stroke="#b81820" stroke-width="1.2"/><path d="M11 3.5 L18.5 7.8 V17.2 L11 21.5 L3.5 17.2 V7.8 Z" fill="#6a0608"/><rect x="9.3" y="9" width="3.4" height="10.5" fill="#eee"/><circle cx="11" cy="5.8" r="2" fill="#eee"/></svg>
<div class="abs" style="left:385.3px;top:0.5px;width:45.5px;height:31px;border:1px solid rgba(190,225,250,.6);border-bottom:none;border-radius:2px 2px 0 0;background:linear-gradient(rgba(170,215,245,.42),rgba(120,185,230,.3) 48%,rgba(90,165,220,.25) 52%,rgba(120,190,235,.3))"></div>
<svg class="abs" style="left:397px;top:2.8px" width="23.4" height="23.4" viewBox="-12 -12 24 24"><circle r="11.6" fill="#e8e8e8"/><path d="M0 0 L-10.05 -5.8 A11.6 11.6 0 0 1 10.05 -5.8 Z" fill="#e04a38"/><path d="M0 0 L10.05 -5.8 A11.6 11.6 0 0 1 0 11.6 Z" fill="#f6c820"/><path d="M0 0 L0 11.6 A11.6 11.6 0 0 1 -10.05 -5.8 Z" fill="#2a9a50"/><path d="M0 -5.6 H10.2 A11.6 11.6 0 0 0 -10.05 -5.8 L-4.85 2.8 Z" fill="#e04a38"/><path d="M4.85 2.8 L-0.3 11.6 A11.6 11.6 0 0 0 10.2 -5.6 L0 -5.6 Z" fill="#f6c820"/><path d="M-4.85 2.8 L-10.05 -5.8 A11.6 11.6 0 0 0 -0.3 11.6 L4.85 2.8 Z" fill="#2a9a50"/><circle r="5.4" fill="#f4f4f4"/><circle r="4.3" fill="#4a8af0"/></svg>
<div class="abs" style="left:434px;top:0.5px;width:42.5px;height:31px;border:1px solid rgba(190,225,250,.6);border-bottom:none;border-radius:2px 2px 0 0;background:linear-gradient(rgba(170,215,245,.42),rgba(120,185,230,.3) 48%,rgba(90,165,220,.25) 52%,rgba(120,190,235,.3))"></div>
<div class="abs" style="left:477.6px;top:1px;width:1.2px;height:30px;background:rgba(190,225,250,.55)"></div>
<svg class="abs" style="left:443px;top:3.5px" width="24.5" height="23" viewBox="0 0 24.5 23"><defs><linearGradient id="sg" x1="0" y1="0" x2="0" y2="1"><stop offset="0" stop-color="#16204e"/><stop offset=".6" stop-color="#3a2f7a"/><stop offset="1" stop-color="#8a5ab0"/></linearGradient></defs><path d="M0.6 13 A11.6 11.6 0 0 1 23.9 13 V15.5 H0.6 Z" fill="url(#sg)"/><g fill="#fff"><rect x="3.5" y="9.6" width="2.4" height=".9"/><rect x="4.3" y="8.8" width=".9" height="2.4"/><rect x="6" y="13" width="2" height=".9"/><rect x="8.5" y="4.6" width="1.8" height=".9"/><rect x="9" y="4" width=".8" height="2"/><rect x="11" y="10" width="1.6" height=".8"/><rect x="15.5" y="4" width=".9" height="3"/><rect x="16.6" y="10" width=".9" height="2"/><rect x="19" y="12.5" width="1.6" height=".9"/><rect x="12.5" y="6" width=".8" height=".8"/><rect x="4.5" y="17.6" width="3" height=".9"/><rect x="9.5" y="16.6" width="4" height=".9"/><rect x="15" y="17.6" width="3.5" height=".9"/><rect x="7" y="19.6" width="2.6" height=".9"/><rect x="12" y="19.6" width="3" height=".9"/></g></svg>
<div class="t" style="left:1288.7px;top:9.6px;font-size:9px;color:#fff;letter-spacing:-0.30px;">FR</div>
<div class="abs" style="left:1312.5px;top:14px;border-left:2.8px solid transparent;border-right:2.8px solid transparent;border-bottom:3px solid #fff"></div>
<svg class="abs" style="left:1327.5px;top:9px" width="14" height="13" viewBox="0 0 14 13"><path d="M2 4 Q2 1 6 1 Q10 1 10.5 4 V8 H2 Z" fill="#dcdcdc" stroke="#9a9a9a" stroke-width=".6"/><rect x="1" y="8" width="10.5" height="3.4" fill="#eee" stroke="#999" stroke-width=".6"/><path d="M7.5 6.5 L13 12 M13 6.5 L7.5 12" stroke="#e01818" stroke-width="1.7"/></svg>
<svg class="abs" style="left:1352px;top:9.5px" width="11.6" height="11" viewBox="0 0 11.6 11"><g fill="#fff"><path d="M2.9 0.3 L5.8 2.2 L2.9 4.1 L0 2.2 Z"/><path d="M8.7 0.3 L11.6 2.2 L8.7 4.1 L5.8 2.2 Z"/><path d="M2.9 4.1 L5.8 6 L2.9 7.9 L0 6 Z"/><path d="M8.7 4.1 L11.6 6 L8.7 7.9 L5.8 6 Z"/><path d="M2.9 8.6 L5.8 6.8 L8.7 8.6 L5.8 10.6 Z"/></g></svg>
<svg class="abs" style="left:1370.5px;top:8.5px" width="13" height="14" viewBox="0 0 13 14"><path d="M1.2 0.5 V13.5" stroke="#fff" stroke-width="1.3"/><path d="M2 1.4 Q4.5 0.2 6.5 1.6 Q8.3 2.8 10 2 V7 Q8.3 7.8 6.5 6.6 Q4.5 5.2 2 6.4 Z" fill="#f4f4f4"/><circle cx="8.8" cy="9.6" r="3.6" fill="#e01818" stroke="#fff" stroke-width=".6"/><path d="M7.2 8 L10.4 11.2 M10.4 8 L7.2 11.2" stroke="#fff" stroke-width="1.2"/></svg>
<svg class="abs" style="left:1389px;top:9.5px" width="13" height="12" viewBox="0 0 13 12"><g fill="#fff"><rect x="0" y="9.4" width="1.8" height="2.2"/><rect x="2.7" y="7.4" width="1.8" height="4.2"/><rect x="5.4" y="5.2" width="1.8" height="6.4"/></g><g fill="#5a7ea8"><rect x="8.1" y="2.8" width="1.8" height="8.8"/><rect x="10.8" y="0.4" width="1.8" height="11.2"/></g></svg>
<svg class="abs" style="left:1408.5px;top:9px" width="11" height="13" viewBox="0 0 11 13"><path d="M0.5 4.5 H2.6 L6 1 V12 L2.6 8.5 H0.5 Z" fill="#fff"/><path d="M7.8 3.6 Q9.6 6.5 7.8 9.4" fill="none" stroke="#fff" stroke-width=".9"/></svg>
<div class="t" style="left:1446.7px;top:5.0px;font-size:9.4px;color:#fff;letter-spacing:-0.53px;">15:06</div>
<div class="t" style="left:1434.0px;top:18.0px;font-size:9.4px;color:#fff;letter-spacing:-0.19px;">22/08/2020</div>
<div class="abs" style="left:1489px;top:0.5px;width:11px;height:31px;border:1px solid rgba(200,220,240,.55);border-right:none;background:linear-gradient(90deg,rgba(255,255,255,.28),rgba(255,255,255,.08))"></div>
</div>
</body>
</html>
